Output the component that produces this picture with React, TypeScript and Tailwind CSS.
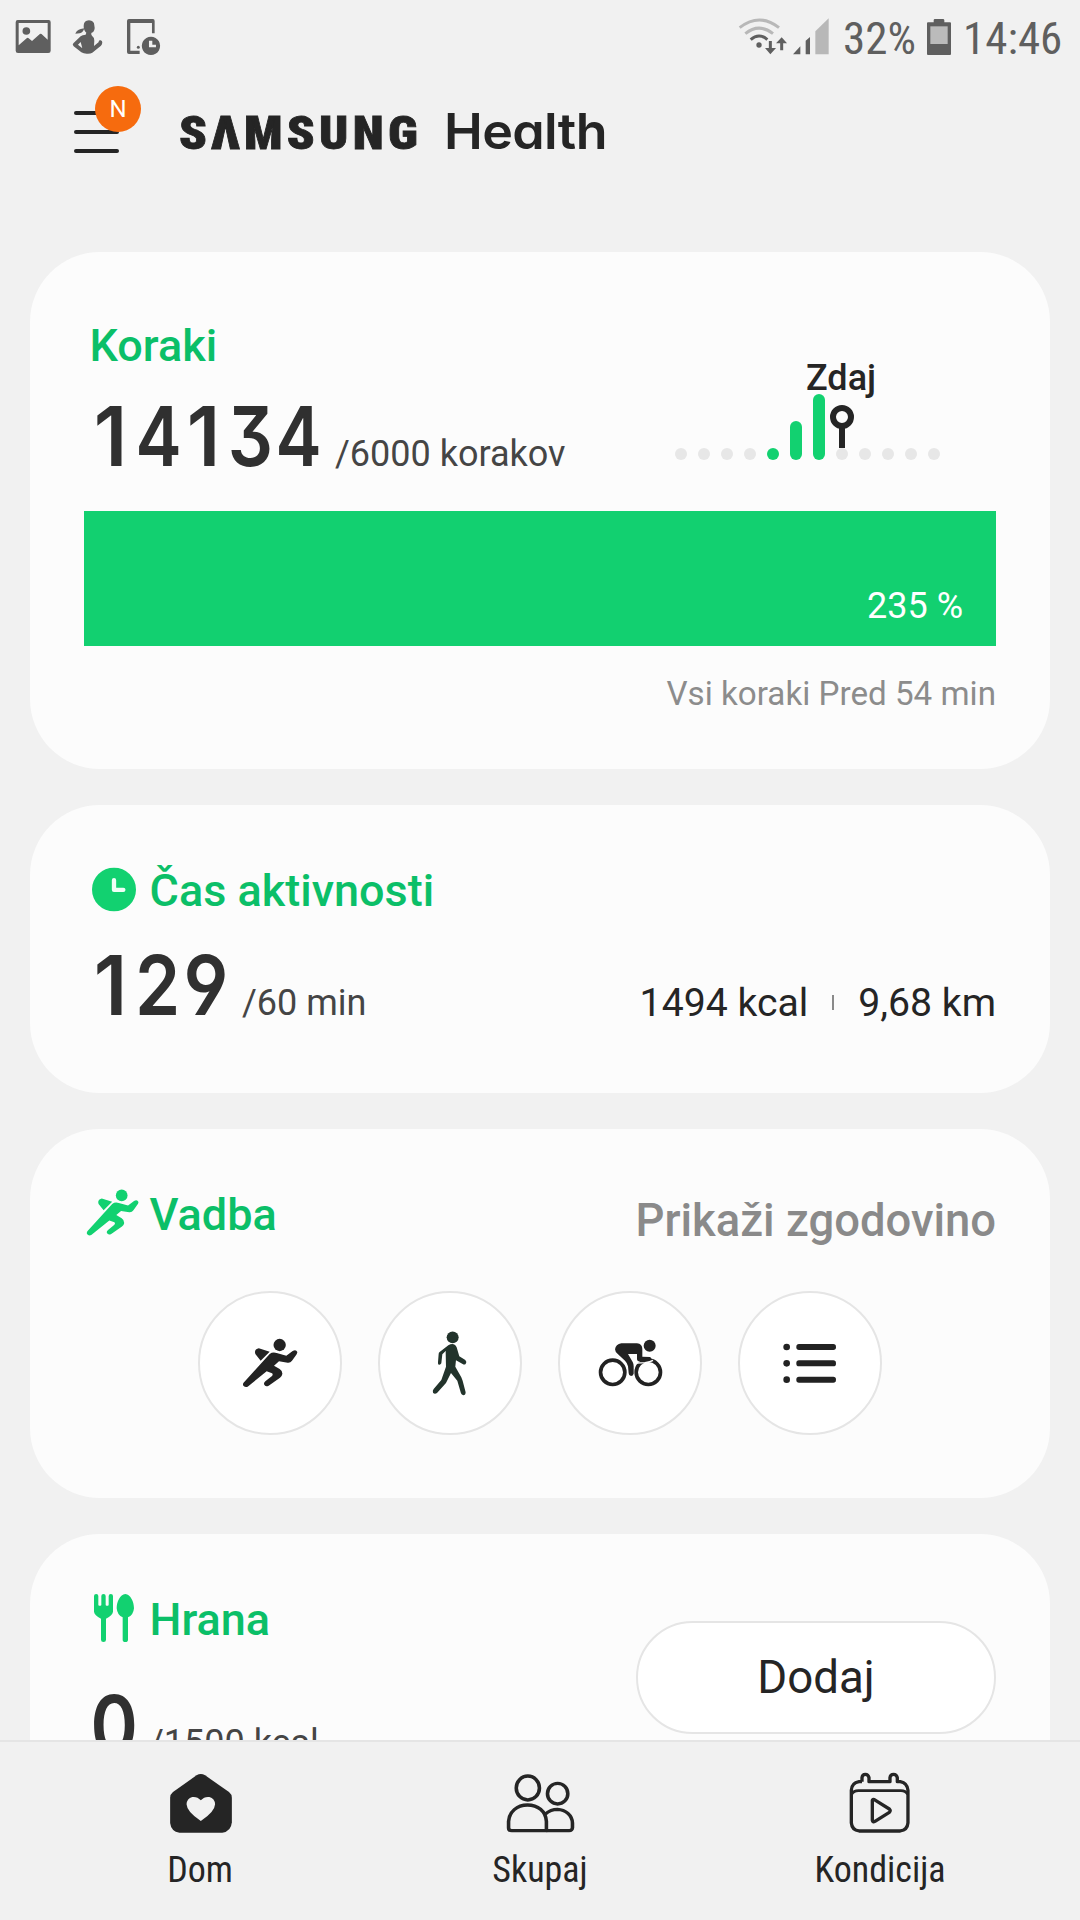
import type { ReactNode } from "react";

const STEPS = [12, 12, 12, 12, 12, 39, 66, 12, 12, 12, 12, 12];

const DIGIT_STYLE: Record<string, string> = {
  "0": "scale-x-[0.87]",
  "1": "scale-x-[0.96] -translate-x-[4px]",
  "2": "scale-x-[0.88] -translate-x-[3px]",
  "3": "scale-x-[0.86] -translate-x-[3px] [font-feature-settings:'cv09']",
  "4": "scale-x-[0.84] -translate-x-[2px]",
  "9": "scale-x-[0.9] -translate-x-[1px] [font-feature-settings:'ss01']",
};

function Runner({ className }: { className: string }) {
  return (
    <svg viewBox="540 500 180 156" className={className} fill="currentColor">
      <circle cx="659" cy="524" r="18.5" />
      <path d="M586 551Q582 539 592 535Q596 533 601 535L629 544L602 571Z" />
      <path d="M629 551Q638 544 650 548L679 556L698 542Q708 536 712 545Q712 549 709 553L696 571Q691 578 683 577L657 573L642 586L659 596Q668 602 667 611Q666 618 660 622L626 646Q616 651 612 642Q611 637 616 633L636 617Q640 612 636 609L620 603L563 649Q554 653 549 645Q548 640 552 636Z" />
    </svg>
  );
}

function Walker() {
  return (
    <svg viewBox="1111 480 112 200" className="h-[66.7px] w-[37.3px] text-[#22332b]" fill="currentColor">
      <circle cx="1176" cy="502" r="18" />
      <path d="M1137 546L1163 526Q1180 516 1188 532L1196 559L1214 570Q1220 576 1215 582Q1211 585 1206 582L1186 571L1184 590L1202 622L1206 632L1215 667Q1215 676 1208 676Q1203 675 1201 670L1190 632L1171 609L1156 639L1129 669Q1122 674 1117 668Q1115 662 1119 657L1142 630L1156 590L1155 543L1145 553L1142 580Q1139 586 1134 584Q1131 581 1132 577L1134 552Q1134 548 1137 546Z" />
    </svg>
  );
}

function Cyclist() {
  return (
    <svg viewBox="230 505 200 148" className="h-[49.3px] w-[66.7px] text-[#222]" fill="currentColor">
      <g fill="none" stroke="currentColor" strokeWidth="11">
        <circle cx="277" cy="608" r="36.5" />
        <circle cx="384" cy="608" r="36.5" />
      </g>
      <path d="M350 580L374 579Q390 577 398 572" fill="none" stroke="#fff" strokeWidth="4" />
      <circle cx="388" cy="528" r="18" />
      <path d="M303 521H350Q366 523 366 538V561L389 562Q396 566 390 570L358 575Q350 575 350 568V553H323L337 577Q340 583 340 590V612Q338 619 332 619Q325 618 325 611L323 590Q321 580 314 573L293 554Q284 547 284 539Q286 524 303 521Z" />
    </svg>
  );
}

function ListIcon() {
  return (
    <svg viewBox="790 518 160 122" className="h-[40.7px] w-[53.3px] text-[#222]" fill="currentColor">
      {[530, 579, 628].map((y) => (
        <g key={y}>
          <circle cx="801" cy={y} r="10" />
          <rect x="830" y={y - 9} width="119" height="18" rx="8" />
        </g>
      ))}
    </svg>
  );
}

function StatusBar() {
  return (
    <div className="flex h-[76px] shrink-0 items-start text-[#5f5f5f]">
      <svg viewBox="45 57 110 108" className="mt-[19px] ml-[15px] h-[36px] w-[36.7px]" fill="currentColor">
        <path
          fillRule="evenodd"
          d="M53 60H146Q152 60 152 67V152Q152 159 145 159H54Q47 159 47 152V67Q47 60 53 60ZM56 69V136L80 115Q83 112 86 115L96 123L117 104Q122 99 127 104L143 119V69Z"
        />
        <circle cx="79" cy="93" r="11.5" />
      </svg>
      <svg viewBox="215 57 94 108" className="mt-[19px] ml-[20px] h-[36px] w-[31.3px]" fill="currentColor">
        <path d="M266 61Q282 62 282 76Q284 83 282 90Q280 97 273 99Q272 104 275 107Q283 113 282 122L281 138L291 130Q296 127 296 122Q297 120 301 121Q306 122 306 127Q306 134 302 137L276 158Q271 161 263 161Q251 162 243 157L220 139Q215 134 219 130L241 109Q246 104 256 104L258 98Q250 92 250 78Q250 62 266 61ZM241 126L233 134L246 145Z" fillRule="evenodd" />
        <path d="M252 85Q248 98 238 100L225 101Q229 90 241 87Z" />
      </svg>
      <svg viewBox="378 55 106 111" className="mt-[18.3px] ml-[23px] h-[37px] w-[35.3px]" fill="currentColor">
        <path d="M387 58H459Q464 58 464 64V101H456V70H391V153H419V163H387Q381 163 381 157V64Q381 58 387 58Z" />
        <circle cx="415" cy="143" r="4.5" />
        <path fillRule="evenodd" d="M453 111A27.500 27.500 0 1 1 452.900 111ZM447 123V143H468V135H457V123Z" />
      </svg>
      <svg viewBox="115 50 275 120" className="mt-[16.700px] ml-[576.500px] h-[40px] w-[91.7px]" fill="none">
        <path d="M120 82Q179 36 238 82M137 100Q178 67 220 100" stroke="#b8b8b8" strokeWidth="9" />
        <path d="M153 118Q178 96 203 118" stroke="#5f5f5f" strokeWidth="9" />
        <circle cx="178" cy="134" r="8" fill="#5f5f5f" />
        <path d="M212 122V152M246 120V150" stroke="#5f5f5f" strokeWidth="9" />
        <path d="M196 143L212 162L229 143ZM229 129L246 111L262 129Z" fill="#5f5f5f" />
        <path d="M280 162L302 138V162ZM318 162V121L331 110V162Z" fill="#5f5f5f" />
        <path d="M347 162V93L387 54V162Z" fill="#b8b8b8" />
      </svg>
      <span className="mt-[16px] ml-[13.500px] w-[76px] text-[45px] leading-none [font-stretch:75%]">32%</span>
      <svg viewBox="678 54 78 114" className="mt-[18px] ml-[7px] h-[38px] w-[26px]">
        <path d="M701 67V61Q701 57 705 57H729Q733 57 733 61V67H750Q753 67 753 70V162Q753 165 750 165H684Q681 165 681 162V70Q681 67 684 67Z" fill="#5f5f5f" />
        <rect x="691" y="79" width="52" height="53" fill="#bbb" />
      </svg>
      <span className="mt-[16px] ml-[11px] text-[45px] leading-none [font-stretch:75%]">14:46</span>
    </div>
  );
}

function Header() {
  return (
    <header className="flex h-[176px] shrink-0 items-start text-[#252525]">
      <div className="relative mt-[34.500px] ml-[73.5px] flex w-[45px] flex-col gap-[14.5px]">
        <span className="h-[4.500px] rounded-full bg-[#252525]" />
        <span className="h-[4.500px] rounded-full bg-[#252525]" />
        <span className="h-[4.500px] rounded-full bg-[#252525]" />
        <span className="absolute -top-[24.500px] left-[21.500px] flex size-[46px] items-center justify-center rounded-full bg-[#f66b0e] text-[24px] leading-none text-white">
          N
        </span>
      </div>
      <h1 className="mt-[30px] ml-[60px] flex items-baseline leading-none">
        <span className="w-[265px] text-[47px] leading-none font-black">
          <span
            aria-label="SAMSUNG"
            className="inline-block origin-left scale-x-[1.08] tracking-[4px] [-webkit-text-stroke:0.8px_#252525] [font-stretch:75%]"
          >
            SΛMSUNG
          </span>
        </span>
        <span className="origin-left scale-x-[1.04] font-[Inter] text-[50px] leading-none font-semibold tracking-[-0.6px] [font-feature-settings:'cv11']">
          Health
        </span>
      </h1>
    </header>
  );
}

function Card({ className, children }: { className: string; children: ReactNode }) {
  return <section className={`shrink-0 rounded-[70px] bg-[#fcfcfc] ${className}`}>{children}</section>;
}

function CardTitle({ icon, children }: { icon?: ReactNode; children: ReactNode }) {
  return (
    <h2 className="flex h-[45px] items-center text-[45px] leading-none font-medium text-[#0bbf68]">
      {icon && <span className="flex w-[65.500px] items-center">{icon}</span>}
      {children}
    </h2>
  );
}

function Amount({ value, goal }: { value: string; goal: string }) {
  return (
    <p className="flex h-[82px] items-baseline pl-[7px]">
      <span className="flex font-[Inter] text-[82.5px] leading-none font-semibold text-[#303030]">
        {value.split("").map((digit, i) => (
          <span key={i} className="flex w-[46.500px] justify-center">
            <span className={DIGIT_STYLE[digit]}>{digit}</span>
          </span>
        ))}
      </span>
      <span className="ml-[11.500px] text-[36px] leading-none whitespace-nowrap text-[#454545]">{goal}</span>
    </p>
  );
}

function StepsChart() {
  return (
    <div className="flex w-[321px] flex-col pt-[108px]">
      <span className="ml-[131px] text-[36px] leading-none font-medium text-[#252525]">Zdaj</span>
      <svg viewBox="0 0 265 66" className="-mt-[2px] h-[66px] w-[265px]">
        {STEPS.map((h, i) => (
          <rect key={i} x={23 * i} y={66 - h} width="12" height={h} rx="6" fill={i > 3 && i < 7 ? "#12d170" : "#e7e7e7"} />
        ))}
        <rect x="164" y="33" width="6" height="21" fill="#252525" />
        <circle cx="167" cy="23" r="9" fill="none" stroke="#252525" strokeWidth="6" />
      </svg>
    </div>
  );
}

function Round({ children }: { children: ReactNode }) {
  return (
    <button className="flex size-[144px] items-center justify-center rounded-full border-2 border-[#e5e5e5] bg-white">
      {children}
    </button>
  );
}

function NavItem({ label, className, children }: { label: string; className: string; children: ReactNode }) {
  return (
    <a className={`flex flex-col items-center ${className}`}>
      {children}
      <span className="mt-[17px] text-[36px] leading-none [font-stretch:75%]">{label}</span>
    </a>
  );
}

export default function App() {
  return (
    <div className="flex h-[1920px] w-[1080px] flex-col overflow-hidden bg-[#f1f1f1] font-[Roboto,sans-serif]">
      <StatusBar />
      <Header />
      <main className="flex min-h-0 flex-1 flex-col gap-9 overflow-hidden px-[30px]">
        <Card className="h-[517px] px-[54px]">
          <div className="flex h-[259px] justify-between">
            <div className="pt-[71px]">
              <div className="ml-[5.500px]">
                <CardTitle>Koraki</CardTitle>
              </div>
              <div className="mt-[27px]">
                <Amount value="14134" goal="/6000 korakov" />
              </div>
            </div>
            <StepsChart />
          </div>
          <div className="flex h-[135px] items-end justify-end bg-[#12d070] pr-[33px] pb-[22px] text-[36px] leading-none text-white">
            235 %
          </div>
          <p className="mt-[31px] text-right text-[33.200px] leading-none text-[#8c8c8c]">Vsi koraki Pred 54 min</p>
        </Card>

        <Card className="h-[288px] px-[54px] pt-[63px]">
          <CardTitle
            icon={
              <svg viewBox="96 81 132 132" className="ml-[8px] size-[44px] -translate-y-[1.500px]">
                <circle cx="162" cy="147" r="66" fill="#12d170" />
                <path d="M162 119V148H190" fill="none" stroke="#effff6" strokeWidth="13" strokeLinecap="round" strokeLinejoin="round" />
              </svg>
            }
          >
            Čas aktivnosti
          </CardTitle>
          <div className="mt-[31px] flex items-baseline justify-between">
            <Amount value="129" goal="/60 min" />
            <p className="flex translate-y-[1px] items-baseline text-[39.200px] leading-none text-[#252525]">
              1494 kcal
              <span className="mx-[24px] h-[15px] w-[2px] -translate-y-[6px] bg-[#8a8a8a]" />
              9,68 km
            </p>
          </div>
        </Card>

        <Card className="h-[369px] px-[54px] pt-[63px]">
          <div className="flex h-[45px] justify-between">
            <CardTitle icon={<Runner className="h-[51px] w-[57px] -translate-y-[2px] text-[#12d170]" />}>Vadba</CardTitle>
            <span className="mt-[6px] text-[45.400px] leading-none font-medium text-[#8a8a8a]">Prikaži zgodovino</span>
          </div>
          <div className="mt-[54px] flex justify-center gap-[36px]">
            <Round>
              <Runner className="h-[52px] w-[60px] text-[#222]" />
            </Round>
            <Round>
              <Walker />
            </Round>
            <Round>
              <Cyclist />
            </Round>
            <Round>
              <ListIcon />
            </Round>
          </div>
        </Card>

        <Card className="flex h-[288px] justify-between px-[54px]">
          <div className="pt-[63px]">
            <CardTitle
              icon={
                <svg viewBox="102 102 120 144" className="ml-[10px] h-[48px] w-[40px] -translate-y-[2px] text-[#12d170]" fill="currentColor">
                  <path d="M102 108a6.500 6 0 0 1 13 0V134q0 3 3 3h3q3 0 3-3V108a6.500 6 0 0 1 13 0V134q0 3 3 3h3q3 0 3-3V108a6.500 6 0 0 1 13 0V155Q158 165 138 176V239a7.500 7 0 0 1-15 0V176Q103 165 102 155Z" />
                  <path d="M196 102C212 104 222 125 222 145Q220 166 204 172V239a8 7 0 0 1-16 0V172Q172 166 170 145C170 125 180 104 196 102Z" />
                </svg>
              }
            >
              Hrana
            </CardTitle>
            <div className="mt-[42px]">
              <Amount value="0" goal="/1500 kcal" />
            </div>
          </div>
          <button className="mt-[87px] h-[113px] w-[360px] rounded-full border-2 border-[#e5e5e5] bg-white text-[45.600px] leading-none text-[#252525]">
            Dodaj
          </button>
        </Card>
      </main>

      <nav className="flex h-[180px] shrink-0 justify-between border-t-2 border-[#e5e5e5] px-[100px] pt-[30px] text-[#252525]">
        <NavItem label="Dom" className="w-[200px]">
          <svg viewBox="190 95 185 190" preserveAspectRatio="none" className="h-[63.3px] w-[66px] translate-x-[1px]">
            <path fill="currentColor" d="M270 105Q282 97 294 105L361 155Q369 162 369 172V246Q367 274 342 277H222Q199 274 196 248V172Q196 162 204 155Z" />
            <path fill="#f1f1f1" d="M282 180Q272 168 258 170Q243 174 242 192Q243 215 282 242Q321 215 322 192Q321 174 306 170Q292 168 282 180Z" />
          </svg>
        </NavItem>
        <NavItem label="Skupaj" className="w-[200px]">
          <svg viewBox="1135 95 200 190" preserveAspectRatio="none" className="h-[63.3px] w-[71.4px] translate-x-[1px]" fill="none" stroke="currentColor" strokeWidth="10" strokeLinejoin="round">
            <ellipse cx="1199" cy="143" rx="32.5" ry="36" />
            <ellipse cx="1282.5" cy="160" rx="28.5" ry="31" />
            <path d="M1154 271H1251V243C1249 212 1227 194 1198 194C1168 194 1147 215 1145 243V262Q1145 271 1154 271Z" />
            <path d="M1248 221Q1263 207 1282 207C1305 208 1323 225 1324 248V262Q1323 271 1315 271H1251" />
          </svg>
        </NavItem>
        <NavItem label="Kondicija" className="w-[200px]">
          <svg viewBox="265 95 190 190" className="size-[63.3px]" fill="none" stroke="currentColor" strokeWidth="10" strokeLinejoin="round">
            <path d="M307 124H298Q276 128 275 150V248Q277 270 298 272H422Q443 270 445 248V150Q443 128 422 124H413V112Q411 102 402 102Q392 102 391 112V124H328V112Q326 102 317 102Q308 102 307 112V124" />
            <path d="M276 162Q282 151 296 151H424Q438 151 444 162" strokeWidth="8" />
            <path d="M338 180Q338 176 344 178L389 206Q394 211 389 216L346 243Q339 247 338 240Z" />
          </svg>
        </NavItem>
      </nav>
    </div>
  );
}
